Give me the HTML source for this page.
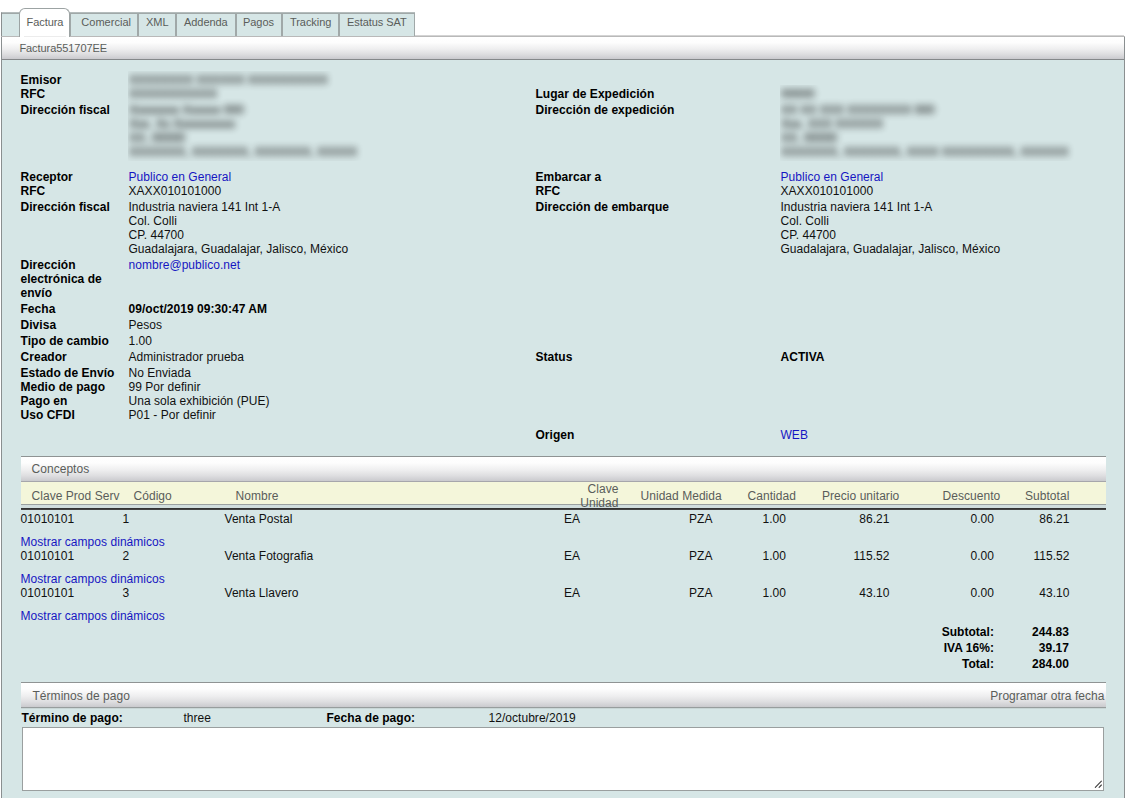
<!DOCTYPE html>
<html lang="es">
<head>
<meta charset="utf-8">
<title>Factura551707EE</title>
<style>
html,body{margin:0;padding:0;background:#fff;}
body{width:1126px;height:798px;overflow:hidden;position:relative;font-family:"Liberation Sans",sans-serif;font-size:12px;line-height:14px;color:#111;letter-spacing:0.04px;}
.abs,.t,.b,.l,.r,.h{position:absolute;white-space:nowrap;}
.t,.b,.l,.h{margin-left:-0.5px;}
.b{font-weight:bold;color:#000;}
.l{color:#1616c2;}
.r{text-align:right;}
.h{color:#5a5d5a;}
.clip{position:absolute;overflow:hidden;}
.blur{filter:url(#bl);color:#000;letter-spacing:0;text-shadow:0.5px 0 0 rgba(0,0,0,.45);opacity:.9;}
#panel{position:absolute;left:1px;top:36px;width:1122px;height:780px;background:#d6e6e6;border-left:1px solid #8a8f90;border-right:1px solid #8a8f90;}
#tabbar{position:absolute;left:1px;top:12px;width:413px;height:24px;background:#d6e6e6;border-top:1px solid #b4bcbc;border-left:1px solid #8a8f90;box-sizing:content-box;}
.tab{position:absolute;top:13px;border:1px solid #a0a8a8;border-bottom:none;box-sizing:border-box;height:23px;}
.tab span{position:relative;top:1px;}
#tabact{position:absolute;left:19px;top:8px;width:51px;height:29px;background:#fff;border:1px solid #9ca3a3;border-bottom:none;border-radius:6px 6px 0 0;box-sizing:border-box;font-size:11px;line-height:14px;color:#555;text-align:center;}
.bar{position:absolute;background:linear-gradient(#fff 0%,#fdfdfd 25%,#eeeeef 55%,#dedee0 78%,#cacace 100%);border-top:1px solid #b9b9b9;border-bottom:1px solid #85888a;box-sizing:border-box;}
.bar2{border-top-color:#8f9393;border-bottom-color:#a6a6ab;}
#hline{position:absolute;left:1px;top:36px;width:1124px;height:1px;background:#b5b5b5;}
</style>
</head>
<body>
<svg width="0" height="0" style="position:absolute"><defs><filter id="bl" x="-15%" y="-80%" width="130%" height="260%" color-interpolation-filters="sRGB"><feGaussianBlur stdDeviation="3.5 3.8"/></filter></defs></svg>
<div id="panel"></div>
<div id="tabbar"></div>
<div class="abs" style="left:2px;top:13px;width:413px;height:1px;background:#9fa7a7;"></div>
<div id="hline"></div>
<div class="abs" style="left:415px;top:35px;width:709px;height:1px;background:#d4d4d4;"></div>
<div class="bar" style="left:2px;top:36px;width:1122px;height:24px;"></div>
<div class="t h" style="left:19.9px;top:41px;font-size:11px;letter-spacing:-0.07px;">Factura551707EE</div>

<div id="tabact"></div>
<div class="abs" style="left:24px;top:36px;width:42px;height:1px;background:#ececec;"></div>
<div class="t h" style="left:27px;top:15px;font-size:11px;letter-spacing:-0.06px;">Factura</div>
<div class="tab" style="left:70px;width:68px;"></div><div class="t h" style="left:81.8px;top:15px;font-size:11px;letter-spacing:0.02px;">Comercial</div>
<div class="tab" style="left:138px;width:38px;"></div><div class="t h" style="left:146.5px;top:15px;font-size:11px;letter-spacing:-0.06px;">XML</div>
<div class="tab" style="left:176px;width:60px;"></div><div class="t h" style="left:184.5px;top:15px;font-size:11px;letter-spacing:-0.06px;">Addenda</div>
<div class="tab" style="left:236px;width:46px;"></div><div class="t h" style="left:243.5px;top:15px;font-size:11px;letter-spacing:-0.06px;">Pagos</div>
<div class="tab" style="left:282px;width:57px;"></div><div class="t h" style="left:290.5px;top:15px;font-size:11px;letter-spacing:-0.06px;">Tracking</div>
<div class="tab" style="left:339px;width:76px;"></div><div class="t h" style="left:347.5px;top:15px;font-size:11px;letter-spacing:-0.06px;">Estatus SAT</div>

<!-- Emisor -->
<div class="b" style="left:21px;top:73px;">Emisor</div>
<div class="b" style="left:21px;top:87px;">RFC</div>
<div class="b" style="left:21px;top:103px;">Dirección fiscal</div>
<div class="clip" style="left:128px;top:71px;width:260px;height:90px;"><div class="t blur" style="left:1.5px;top:2px;">XXXXXXXX XXXXXX XXXXXXXXXX<br>XXXXXXXXXXX</div><div class="t blur" style="left:1.5px;top:32px;">Xxxxxxxx Xxxxxx 000<br>Xxx. Xx Xxxxxxxxxx<br>XX. 00000<br>XXXXXXX, XXXXXXX, XXXXXXX, XXXXX</div></div>

<div class="b" style="left:536px;top:87px;">Lugar de Expedición</div>
<div class="b" style="left:536px;top:103px;">Dirección de expedición</div>
<div class="clip" style="left:780px;top:85px;width:310px;height:76px;"><div class="t blur" style="left:1.5px;top:2px;">00000</div><div class="t blur" style="left:1.5px;top:18px;">XX XX XXX XXXXXXXX 000<br>Xxx. XXX XXXXXX<br>XX. 00000<br>XXXXXXX, XXXXXXX, XXXX XXXXXXXXX, XXXXXX</div></div>

<!-- Receptor -->
<div class="b" style="left:21px;top:170px;">Receptor</div>
<div class="b" style="left:21px;top:184px;">RFC</div>
<div class="b" style="left:21px;top:200px;">Dirección fiscal</div>
<div class="l" style="left:129px;top:170px;">Publico en General</div>
<div class="t" style="left:129px;top:184px;">XAXX010101000</div>
<div class="t" style="left:129px;top:200px;">Industria naviera 141 Int 1-A<br>Col. Colli<br>CP. 44700<br>Guadalajara, Guadalajar, Jalisco, México</div>

<div class="b" style="left:536px;top:170px;">Embarcar a</div>
<div class="b" style="left:536px;top:184px;">RFC</div>
<div class="b" style="left:536px;top:200px;">Dirección de embarque</div>
<div class="l" style="left:781px;top:170px;">Publico en General</div>
<div class="t" style="left:781px;top:184px;">XAXX010101000</div>
<div class="t" style="left:781px;top:200px;">Industria naviera 141 Int 1-A<br>Col. Colli<br>CP. 44700<br>Guadalajara, Guadalajar, Jalisco, México</div>

<div class="b" style="left:21px;top:258px;">Dirección<br>electrónica de<br>envío</div>
<div class="l" style="left:129px;top:258px;">nombre@publico.net</div>

<div class="b" style="left:21px;top:302px;">Fecha</div>
<div class="b" style="left:129px;top:302px;">09/oct/2019 09:30:47 AM</div>
<div class="b" style="left:21px;top:318px;">Divisa</div>
<div class="t" style="left:129px;top:318px;">Pesos</div>
<div class="b" style="left:21px;top:334px;">Tipo de cambio</div>
<div class="t" style="left:129px;top:334px;">1.00</div>
<div class="b" style="left:21px;top:350px;">Creador</div>
<div class="t" style="left:129px;top:350px;">Administrador prueba</div>
<div class="b" style="left:536px;top:350px;">Status</div>
<div class="b" style="left:781px;top:350px;">ACTIVA</div>
<div class="b" style="left:21px;top:366px;">Estado de Envío</div>
<div class="t" style="left:129px;top:366px;">No Enviada</div>
<div class="b" style="left:21px;top:380px;">Medio de pago</div>
<div class="t" style="left:129px;top:380px;">99 Por definir</div>
<div class="b" style="left:21px;top:394px;">Pago en</div>
<div class="t" style="left:129px;top:394px;">Una sola exhibición (PUE)</div>
<div class="b" style="left:21px;top:408px;">Uso CFDI</div>
<div class="t" style="left:129px;top:408px;">P01 - Por definir</div>
<div class="b" style="left:536px;top:428px;">Origen</div>
<div class="l" style="left:781px;top:428px;">WEB</div>

<!-- Conceptos -->
<div class="bar bar2" style="left:21px;top:456px;width:1085px;height:26px;"></div>
<div class="t h" style="left:32px;top:462px;">Conceptos</div>
<div class="abs" style="left:21px;top:482px;width:1085px;height:22px;background:#f4f6da;"></div>
<div class="abs" style="left:21px;top:504px;width:1085px;height:1px;background:#9aa0a0;"></div>
<div class="abs" style="left:21px;top:505px;width:1085px;height:3px;background:#d0dddd;"></div>
<div class="abs" style="left:21px;top:508px;width:1085px;height:2px;background:linear-gradient(#2a2a2a,#4a4a4a);"></div>
<div class="t h" style="left:32px;top:489px;">Clave Prod Serv</div>
<div class="t h" style="left:134px;top:489px;">Código</div>
<div class="t h" style="left:236px;top:489px;">Nombre</div>
<div class="r h" style="right:507.5px;top:482px;line-height:14px;">Clave<br>Unidad</div>
<div class="t h" style="left:641px;top:489px;">Unidad Medida</div>
<div class="t h" style="left:748px;top:489px;">Cantidad</div>
<div class="t h" style="left:822.5px;top:489px;">Precio unitario</div>
<div class="t h" style="left:943px;top:489px;">Descuento</div>
<div class="t h" style="left:1025.5px;top:489px;">Subtotal</div>

<div class="t" style="left:21px;top:512px;">01010101</div>
<div class="t" style="left:123px;top:512px;">1</div>
<div class="t" style="left:225px;top:512px;">Venta Postal</div>
<div class="t" style="left:564.5px;top:512px;">EA</div>
<div class="t" style="left:689.5px;top:512px;">PZA</div>
<div class="t" style="left:763px;top:512px;">1.00</div>
<div class="r" style="right:236.5px;top:512px;">86.21</div>
<div class="r" style="right:132px;top:512px;">0.00</div>
<div class="r" style="right:56.5px;top:512px;">86.21</div>
<div class="l" style="left:21px;top:535px;">Mostrar campos dinámicos</div>

<div class="t" style="left:21px;top:549px;">01010101</div>
<div class="t" style="left:123px;top:549px;">2</div>
<div class="t" style="left:225px;top:549px;">Venta Fotografia</div>
<div class="t" style="left:564.5px;top:549px;">EA</div>
<div class="t" style="left:689.5px;top:549px;">PZA</div>
<div class="t" style="left:763px;top:549px;">1.00</div>
<div class="r" style="right:236.5px;top:549px;">115.52</div>
<div class="r" style="right:132px;top:549px;">0.00</div>
<div class="r" style="right:56.5px;top:549px;">115.52</div>
<div class="l" style="left:21px;top:572px;">Mostrar campos dinámicos</div>

<div class="t" style="left:21px;top:586px;">01010101</div>
<div class="t" style="left:123px;top:586px;">3</div>
<div class="t" style="left:225px;top:586px;">Venta Llavero</div>
<div class="t" style="left:564.5px;top:586px;">EA</div>
<div class="t" style="left:689.5px;top:586px;">PZA</div>
<div class="t" style="left:763px;top:586px;">1.00</div>
<div class="r" style="right:236.5px;top:586px;">43.10</div>
<div class="r" style="right:132px;top:586px;">0.00</div>
<div class="r" style="right:56.5px;top:586px;">43.10</div>
<div class="l" style="left:21px;top:609px;">Mostrar campos dinámicos</div>

<div class="b r" style="right:132px;top:625px;">Subtotal:</div>
<div class="b r" style="right:57px;top:625px;">244.83</div>
<div class="b r" style="right:132px;top:641px;">IVA 16%:</div>
<div class="b r" style="right:57px;top:641px;">39.17</div>
<div class="b r" style="right:132px;top:657px;">Total:</div>
<div class="b r" style="right:57px;top:657px;">284.00</div>

<!-- Terminos de pago -->
<div class="bar bar2" style="left:21px;top:682px;width:1085px;height:26px;border-bottom-color:#979d9d;"></div>
<div class="abs" style="left:21px;top:708px;width:1085px;height:1px;background:#c9d6d6;"></div>
<div class="t h" style="left:33px;top:689px;">Términos de pago</div>
<div class="r h" style="right:21.5px;top:689px;">Programar otra fecha</div>
<div class="b" style="left:22px;top:711px;">Término de pago:</div>
<div class="t" style="left:184px;top:711px;">three</div>
<div class="b" style="left:327px;top:711px;">Fecha de pago:</div>
<div class="t" style="left:489px;top:711px;">12/octubre/2019</div>
<div class="abs" style="left:22px;top:727px;width:1082px;height:64px;background:#fff;border:1px solid #9a9f9f;box-sizing:border-box;">
<svg width="8" height="8" style="position:absolute;right:1px;bottom:2px;" viewBox="0 0 8 8"><path d="M7.4 1.2 L1.3 7.3 M7.4 5 L5.1 7.3" stroke="#3c3c3c" stroke-width="1.1" stroke-linecap="round" fill="none"/></svg>
</div>
</body>
</html>
